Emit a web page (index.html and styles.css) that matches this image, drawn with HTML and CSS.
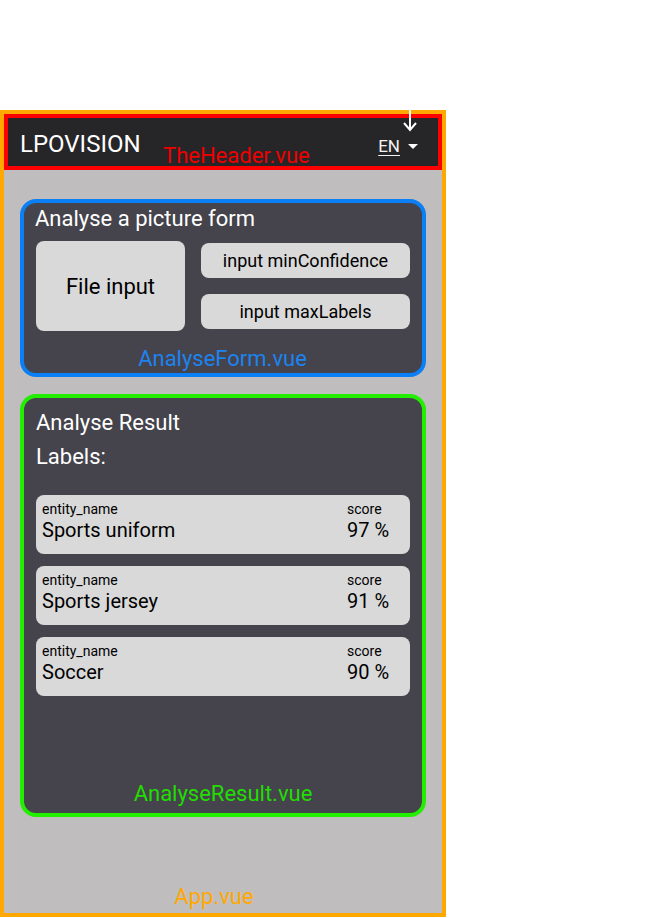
FILE: index.html
```html
<!DOCTYPE html>
<html lang="en">
<head>
<meta charset="utf-8">
<title>LPOVISION</title>
<link rel="stylesheet" href="styles.css">
</head>
<body>
<div class="app">
  <header class="header">
    <span class="logo">LPOVISION</span>
    <span class="tag tag-header">TheHeader.vue</span>
    <div class="lang">
      <span class="lang-code">EN</span>
      <span class="caret"></span>
    </div>
    <svg class="arrow" width="14" height="36" viewBox="0 0 14 36" aria-hidden="true">
      <path d="M7 0 V34" stroke="#fff" stroke-width="2" fill="none"/>
      <path d="M1 27 L7 34 L13 27" stroke="#fff" stroke-width="2" fill="none"/>
    </svg>
  </header>
  <main class="main">
    <section class="card card-form">
      <h2 class="card-title form-title">Analyse a picture form</h2>
      <div class="form-grid">
        <div class="file-input">File input</div>
        <div class="inputs">
          <div class="text-input">input minConfidence</div>
          <div class="text-input">input maxLabels</div>
        </div>
      </div>
      <div class="tag tag-form">AnalyseForm.vue</div>
    </section>
    <section class="card card-result">
      <h2 class="card-title result-title">Analyse Result</h2>
      <h3 class="labels-title">Labels:</h3>
      <div class="label-list">
        <div class="label-row">
          <div class="label-col"><span class="small">entity_name</span><span class="big">Sports uniform</span></div>
          <div class="score-col"><span class="small">score</span><span class="big">97 %</span></div>
        </div>
        <div class="label-row">
          <div class="label-col"><span class="small">entity_name</span><span class="big">Sports jersey</span></div>
          <div class="score-col"><span class="small">score</span><span class="big">91 %</span></div>
        </div>
        <div class="label-row">
          <div class="label-col"><span class="small">entity_name</span><span class="big">Soccer</span></div>
          <div class="score-col"><span class="small">score</span><span class="big">90 %</span></div>
        </div>
      </div>
      <div class="tag tag-result">AnalyseResult.vue</div>
    </section>
    <div class="tag tag-app">App.vue</div>
  </main>
</div>
</body>
</html>
```
FILE: styles.css
```css
* { box-sizing: border-box; }
html, body { margin: 0; padding: 0; background: #ffffff; }
body { font-family: Roboto, "Liberation Sans", sans-serif; }

.app {
  margin-top: 110px;
  width: 446px;
  height: 807px;
  border: 4px solid #ffa800;
  background: #bfbdbe;
  display: flex;
  flex-direction: column;
}

.header {
  position: relative;
  flex: 0 0 56px;
  border: 4px solid #ff0000;
  background: #262628;
  display: flex;
  align-items: flex-start;
  padding: 12px 0 0 12px;
  color: #fff;
}
.logo {
  font-size: 24px;
  line-height: 28px;
}
.tag { font-size: 22px; line-height: 26px; }
.tag-header {
  position: absolute;
  left: 155px;
  top: 25px;
  color: #ee0000;
}
.lang {
  margin-left: auto;
  margin-right: 20px;
  margin-top: 6px;
  display: flex;
  align-items: center;
  gap: 8px;
}
.lang-code {
  font-size: 17px;
  line-height: 20px;
  text-decoration: underline;
  text-underline-offset: 3px;
  color: #f2f2f2;
}
.caret {
  width: 0; height: 0;
  margin-top: 1px;
  border-left: 5px solid transparent;
  border-right: 5px solid transparent;
  border-top: 5px solid #fff;
}
.arrow {
  position: absolute;
  left: 395px;
  top: -22px;
}

.main {
  flex: 1;
  display: flex;
  flex-direction: column;
  padding: 29px 16px 0;
}
.card {
  border-radius: 16px;
  background: #45434c;
  color: #fff;
}
.card-form {
  border: 4px solid #0b7ff5;
  height: 178px;
  padding: 3px 12px 0 11px;
  display: flex;
  flex-direction: column;
}
.card-title {
  margin: 0;
  font-weight: 400;
  font-size: 22px;
  line-height: 26px;
}
.form-grid {
  margin-top: 9px;
  margin-left: 1px;
  display: grid;
  grid-template-columns: 149px 1fr;
  gap: 16px;
}
.file-input {
  height: 90px;
  border-radius: 8px;
  background: #d9d9d9;
  color: #000;
  font-size: 22px;
  display: flex;
  align-items: center;
  justify-content: center;
}
.inputs {
  display: flex;
  flex-direction: column;
  justify-content: center;
  gap: 16px;
}
.text-input {
  height: 35px;
  border-radius: 8px;
  background: #d9d9d9;
  color: #000;
  font-size: 18px;
  display: flex;
  align-items: center;
  justify-content: center;
}
.tag-form {
  margin-top: auto;
  margin-bottom: 1px;
  text-align: center;
  color: #1c83f0;
}

.card-result {
  margin-top: 17px;
  border: 4px solid #22ee00;
  height: 423px;
  padding: 12px 12px 0 12px;
  display: flex;
  flex-direction: column;
}
.labels-title {
  margin: 8px 0 0;
  font-weight: 400;
  font-size: 22px;
  line-height: 26px;
}
.label-list {
  margin-top: 25px;
  display: flex;
  flex-direction: column;
  gap: 12px;
}
.label-row {
  height: 59px;
  border-radius: 8px;
  background: #d9d9d9;
  color: #000;
  display: grid;
  grid-template-columns: 1fr 63px;
  padding: 6px 0 0 6px;
}
.label-col, .score-col {
  display: flex;
  flex-direction: column;
}
.small { font-size: 14px; line-height: 17px; }
.big { font-size: 20px; line-height: 25px; }
.tag-result {
  margin-top: auto;
  margin-bottom: 6px;
  text-align: center;
  color: #22dd00;
}
.tag-app {
  margin-top: auto;
  margin-bottom: 3px;
  margin-right: 18px;
  text-align: center;
  color: #ffa800;
}
```
